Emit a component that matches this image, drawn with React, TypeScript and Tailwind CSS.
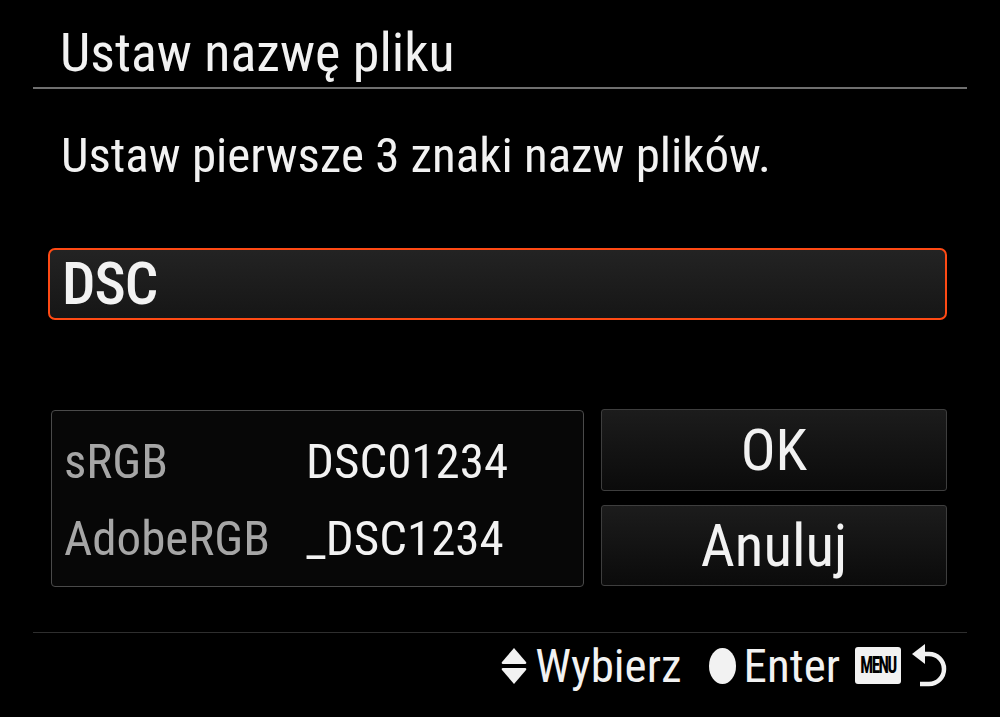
import React from "react";

const FONT = { fontFamily: '"Roboto Condensed", "DejaVu Sans Condensed", sans-serif' };

function UpDown() {
  return (
    <svg width="28" height="40" viewBox="0 0 28 40" className="mr-[7px]">
      <path d="M14 2 L26 16 Q27 18 25 18 H3 Q1 18 2 16 Z" fill="#f2f2f2" />
      <path d="M14 38 L26 24 Q27 22 25 22 H3 Q1 22 2 24 Z" fill="#f2f2f2" />
    </svg>
  );
}

function Back() {
  return (
    <svg width="36" height="46" viewBox="0 0 36 46">
      <path d="M1 11 L14 1 L14 21 Z" fill="#f2f2f2" />
      <path d="M12 11 H18 A15 15 0 0 1 18 41 H9" fill="none" stroke="#f2f2f2" strokeWidth="4.5" />
    </svg>
  );
}

export default function App() {
  return (
    <div className="relative flex h-[717px] w-[1000px] flex-col overflow-hidden bg-black text-[#f2f2f2]" style={FONT}>
      {/* title */}
      <div className="mt-[26px] pl-[60px] text-[54px] leading-none">Ustaw nazwę pliku</div>
      <div className="mx-[33px] mt-[7px] h-[2px] bg-[#6f6f6f]" />

      <div className="mt-[42px] pl-[61px] text-[49px] leading-none">Ustaw pierwsze 3 znaki nazw plików.</div>

      {/* input */}
      <div className="ml-[48px] mr-[53px] mt-[68px] h-[72px] rounded-[7px] border-2 border-[#ff4a14] bg-gradient-to-b from-[#232323] to-[#161616] pl-[12px] pt-[4px] text-[59px] font-medium leading-none tracking-[-1px]">
        DSC
      </div>

      {/* info + buttons */}
      <div className="ml-[51px] mr-[53px] mt-[89px] flex gap-[17px]">
        <div className="mt-[1px] flex h-[177px] w-[533px] flex-col gap-[28px] rounded-[4px] border border-[#4a4a4a] bg-[#070707] pl-[12px] pt-[26px] text-[49px] leading-none">
          <div className="flex">
            <span className="w-[242px] text-[#a6a6a6]">sRGB</span>
            <span>DSC01234</span>
          </div>
          <div className="flex">
            <span className="w-[242px] text-[#a6a6a6]">AdobeRGB</span>
            <span>_DSC1234</span>
          </div>
        </div>
        <div className="flex w-[346px] flex-col gap-[14px]">
          <div className="flex h-[82px] items-center justify-center rounded-[3px] border border-[#3e3e3e] bg-gradient-to-b from-[#1c1c1c] to-[#0b0b0b] text-[58px] leading-none">
            OK
          </div>
          <div className="flex h-[81px] items-center justify-center rounded-[3px] border border-[#3e3e3e] bg-gradient-to-b from-[#1c1c1c] to-[#0b0b0b] text-[59px] leading-none">
            Anuluj
          </div>
        </div>
      </div>

      <div className="mx-[33px] mt-[45px] h-px bg-[#2e2e2e]" />

      {/* footer */}
      <div className="mt-[9px] flex items-center justify-end pr-[53px] text-[47px] leading-none">
        <UpDown />
        <span>Wybierz</span>
        <span className="ml-[27px] mr-[8px] inline-block h-[36px] w-[27px] rounded-[50%] bg-[#f2f2f2]" />
        <span>Enter</span>
        <span className="ml-[15px] mr-[10px] flex h-[37px] w-[46px] items-center justify-center overflow-hidden rounded-[3px] bg-[#f2f2f2] text-black">
          <span className="inline-block scale-y-[1.45] text-[17px] font-bold leading-none tracking-[-1.5px]">MENU</span>
        </span>
        <Back />
      </div>
    </div>
  );
}
